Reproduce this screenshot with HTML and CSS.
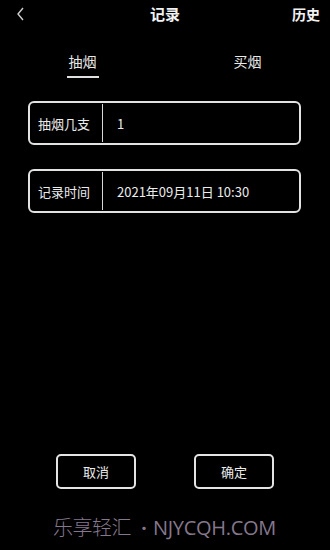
FILE: index.html
```html
<!DOCTYPE html>
<html lang="zh-CN">
<head>
<meta charset="utf-8">
<link rel="stylesheet" href="styles.css">
</head>
<body>
<div class="app">
  <header class="topbar">
    <span class="back">
      <svg width="10" height="14" viewBox="0 0 10 14"><path d="M7 1 L2 7 L7 13" fill="none" stroke="#cfcfcf" stroke-width="1.4"/></svg>
    </span>
    <span class="title">记录</span>
    <span class="history">历史</span>
  </header>
  <nav class="tabs">
    <div class="tab active"><span>抽烟</span></div>
    <div class="tab"><span>买烟</span></div>
  </nav>
  <section class="form">
    <div class="field">
      <div class="label">抽烟几支</div>
      <div class="divider"></div>
      <div class="value">1</div>
    </div>
    <div class="field">
      <div class="label">记录时间</div>
      <div class="divider"></div>
      <div class="value">2021年09月11日 10:30</div>
    </div>
  </section>
  <div class="spacer"></div>
  <div class="actions">
    <button class="btn">取消</button>
    <button class="btn">确定</button>
  </div>
  <div class="watermark"><span class="wm-cn">乐享轻汇</span><span class="wm-dot">•</span><span class="wm-en">NJYCQH.COM</span></div>
</div>
</body>
</html>
```
FILE: styles.css
```css
* { box-sizing: border-box; }
html, body { margin: 0; padding: 0; background: #000; }
body {
  font-family: "Noto Sans CJK SC", "Noto Sans", sans-serif;
  color: #ececec;
}
.app {
  width: 330px;
  height: 550px;
  display: flex;
  flex-direction: column;
  background: #000;
}
.topbar {
  height: 27px;
  display: flex;
  align-items: center;
  justify-content: space-between;
  padding: 0 10px 0 16px;
  position: relative;
}
.back { display: flex; align-items: center; width: 20px; }
.title {
  position: absolute;
  left: 0; right: 0;
  text-align: center;
  font-size: 15px;
  font-weight: 700;
  color: #f2f2f2;
  pointer-events: none;
}
.history {
  font-size: 14px;
  font-weight: 700;
  color: #f2f2f2;
}
.tabs {
  display: flex;
  margin-top: 22px;
  height: 30px;
}
.tab {
  width: 165px;
  display: flex;
  justify-content: center;
  font-size: 14px;
  color: #e8e8e8;
}
.tab span {
  display: block;
  height: 29px;
  line-height: 24px;
  padding: 0 2px;
}
.tab.active span { border-bottom: 2px solid #e0e0e0; }
.form {
  margin-top: 22px;
  padding: 0 29px 0 28px;
  display: flex;
  flex-direction: column;
  gap: 24px;
}
.field {
  height: 44px;
  border: 2px solid #e2e2e2;
  border-radius: 6px;
  display: flex;
  align-items: center;
}
.label {
  width: 72px;
  padding-left: 8px;
  font-size: 13px;
  color: #ececec;
}
.divider {
  width: 1px;
  height: 38px;
  background: #d8d8d8;
}
.value {
  padding-left: 14px;
  font-size: 13px;
  color: #ececec;
}
.spacer { flex: 1; }
.actions {
  display: flex;
  justify-content: space-between;
  padding: 0 56px 0 56px;
}
.btn {
  width: 80px;
  height: 35px;
  background: #000;
  border: 2px solid #e4e4e4;
  border-radius: 5px;
  color: #ececec;
  font-family: "Noto Sans CJK SC", sans-serif;
  font-size: 13px;
  padding: 0;
}
.watermark {
  margin-top: 24px;
  height: 37px;
  padding-left: 53px;
  font-size: 20px;
  font-weight: 300;
  color: #85788c;
  white-space: nowrap;
  line-height: 28px;
  display: flex;
  align-items: baseline;
}
.wm-cn { letter-spacing: -0.5px; }
.wm-dot { margin: 0 0 0 4px; font-size: 18px; }
.wm-en { font-family: "Open Sans", "Noto Sans", sans-serif; font-weight: 400; font-size: 20px; letter-spacing: -0.3px; }
```
